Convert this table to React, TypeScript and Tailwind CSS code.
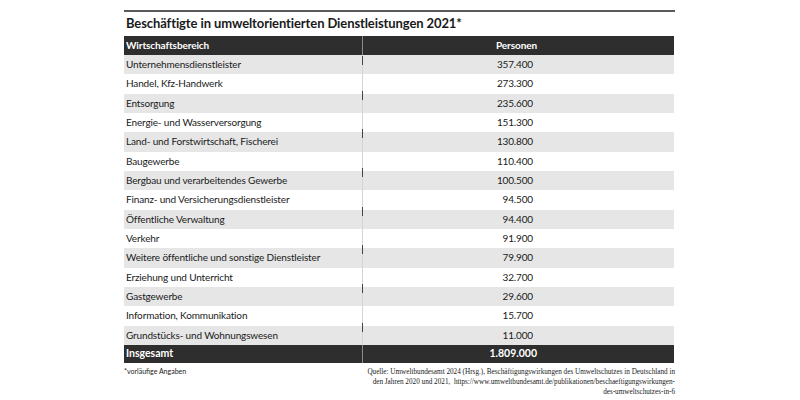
import React from "react";

const rows: [string, string][] = [
  ["Unternehmensdienstleister", "357.400"],
  ["Handel, Kfz-Handwerk", "273.300"],
  ["Entsorgung", "235.600"],
  ["Energie- und Wasserversorgung", "151.300"],
  ["Land- und Forstwirtschaft, Fischerei", "130.800"],
  ["Baugewerbe", "110.400"],
  ["Bergbau und verarbeitendes Gewerbe", "100.500"],
  ["Finanz- und Versicherungsdienstleister", "94.500"],
  ["Öffentliche Verwaltung", "94.400"],
  ["Verkehr", "91.900"],
  ["Weitere öffentliche und sonstige Dienstleister", "79.900"],
  ["Erziehung und Unterricht", "32.700"],
  ["Gastgewerbe", "29.600"],
  ["Information, Kommunikation", "15.700"],
  ["Grundstücks- und Wohnungswesen", "11.000"],
];

export default function App() {
  return (
    <div className="w-[800px] h-[400px] bg-white overflow-hidden" style={{ fontFamily: "Lato, 'Noto Sans', sans-serif" }}>
      <div className="ml-[124px] w-[551px] pt-[10px]">
        <div className="h-[2px] bg-[#5a5a5a]" />
        <div className="h-[24px] pl-[2px] pt-[2px] text-[13px] leading-[18px] tracking-[-0.1px] font-bold text-[#1a1a1a]">
          Beschäftigte in umweltorientierten Dienstleistungen 2021*
        </div>
        <div className="w-[550px]">
          <div className="flex h-[19px] bg-[#2e2e2e] text-white text-[10px] tracking-[-0.1px] font-bold items-center">
            <div className="w-[238px] pl-[2px]">Wirtschaftsbereich</div>
            <div className="w-[1px] h-full bg-[#8a8a8a]" />
            <div className="flex-1 text-center pr-[4px]">Personen</div>
          </div>
          {rows.map(([name, val], i) => (
            <div
              key={name}
              className={`flex h-[19.33px] items-center text-[10px] tracking-[-0.15px] text-[#1a1a1a] ${i % 2 === 0 ? "bg-[#e6e6e6]" : "bg-white"}`}
            >
              <div className="w-[238px] pl-[2px]">{name}</div>
              <div className="relative w-[1px] h-full bg-[#d4d4d4]">
                {i % 2 === 0 && (
                  <div className={`absolute left-0 w-[1px] h-[9px] bg-[#444] ${i === 0 ? "top-[1px]" : "top-[-3px]"}`} />
                )}
              </div>
              <div className="flex-1 text-right pr-[141px]">{val}</div>
            </div>
          ))}
          <div className="flex h-[18px] bg-[#2e2e2e] text-white text-[10.5px] font-bold items-center">
            <div className="w-[238px] pl-[2px]">Insgesamt</div>
            <div className="w-[1px] h-full bg-[#8a8a8a]" />
            <div className="flex-1 text-right pr-[137px]">1.809.000</div>
          </div>
        </div>
        <div className="flex justify-between mt-[4px]">
          <div className="text-[7px] leading-[9px] text-[#1a1a1a]">*vorläufige Angaben</div>
          <div
            className="text-right text-[7.2px] leading-[10px] text-[#1a1a1a] whitespace-nowrap"
            style={{ fontFamily: "'Liberation Serif', serif" }}
          >
            Quelle: Umweltbundesamt 2024 (Hrsg.), Beschäftigungswirkungen des Umweltschutzes in Deutschland in
            <br />
            den Jahren 2020 und 2021, &nbsp;https://www.umweltbundesamt.de/publikationen/beschaeftigungswirkungen-
            <br />
            des-umweltschutzes-in-6
          </div>
        </div>
      </div>
    </div>
  );
}
